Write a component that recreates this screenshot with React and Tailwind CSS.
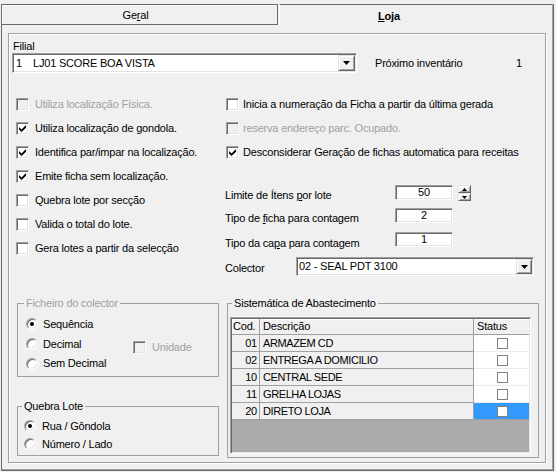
import React from "react";

const sunken =
  "border border-t-[#a0a0a0] border-l-[#a0a0a0] border-r-white border-b-white shadow-[inset_1px_1px_0_#696969,inset_-1px_-1px_0_#e3e3e3]";
const raised =
  "border border-t-[#e3e3e3] border-l-[#e3e3e3] border-r-[#696969] border-b-[#696969] shadow-[inset_1px_1px_0_#fff,inset_-1px_-1px_0_#a0a0a0]";

function CheckMark() {
  return (
    <svg width="7" height="7" viewBox="0 0 7 7">
      <path d="M0 2 L2.5 4.5 L7 0 L7 2.7 L2.5 7 L0 4.6 Z" fill="#000" />
    </svg>
  );
}

function Check({ checked, disabled }) {
  return (
    <span
      className={`w-[13px] h-[13px] shrink-0 flex items-center justify-center ${sunken} ${
        disabled ? "bg-[#f0f0f0]" : "bg-white"
      }`}
    >
      {checked && <CheckMark />}
    </span>
  );
}

function Radio({ checked }) {
  return (
    <span
      className={`w-[12px] h-[12px] shrink-0 rounded-full bg-white flex items-center justify-center ${sunken}`}
    >
      {checked && <span className="w-[4px] h-[4px] rounded-full bg-black" />}
    </span>
  );
}

function DownTri() {
  return (
    <svg width="7" height="4" viewBox="0 0 7 4">
      <path d="M0 0 H7 L3.5 4 Z" fill="#000" />
    </svg>
  );
}

function CheckRow({ label, checked, disabled, gap }) {
  return (
    <div className={`h-[24px] flex items-center ${gap}`}>
      <Check checked={checked} disabled={disabled} />
      <span className={`leading-[13px] whitespace-nowrap ${disabled ? "text-[#a0a0a0]" : ""}`}>{label}</span>
    </div>
  );
}

const leftChecks = [
  { label: "Utiliza localização Física.", disabled: true },
  { label: "Utiliza localização de gondola.", checked: true },
  { label: "Identifica par/impar na localização.", checked: true },
  { label: "Emite ficha sem localização.", checked: true },
  { label: "Quebra lote por secção" },
  { label: "Valida o total do lote." },
  { label: "Gera lotes a partir da selecção" },
];

const rightChecks = [
  { label: "Inicia a numeração da Ficha a partir da última gerada" },
  { label: "reserva endereço parc. Ocupado.", disabled: true },
  { label: "Desconsiderar Geração de fichas automatica para receitas", checked: true },
];

const gridRows = [
  ["01", "ARMAZEM CD"],
  ["02", "ENTREGA A DOMICILIO"],
  ["10", "CENTRAL SEDE"],
  ["11", "GRELHA LOJAS"],
  ["20", "DIRETO LOJA"],
];

export default function App() {
  return (
    <div className="w-[556px] h-[472px] bg-[#f0f0f0] pt-[4px] pl-[1px] font-['Liberation_Sans',Arial,sans-serif] text-[11px] tracking-[-0.2px] text-black overflow-hidden">
      <div className="w-[553px] h-[467px] flex flex-col border-l border-r border-b border-l-[#696969] border-r-[#696969] border-b-[#696969] shadow-[inset_-1px_-1px_0_#a0a0a0]">
        {/* tabs */}
        <div className="flex items-start h-[22px]">
          <div className="w-[276px] h-[21px] border-t border-r border-b border-[#696969] shadow-[inset_1px_1px_0_#fff] flex items-center justify-center pr-[8px] pt-[1px] leading-[13px]">
            <span>
              Ge<u>r</u>al
            </span>
          </div>
          <div className="flex-1 ml-[1px] mr-[1px] h-[22px] border-t border-l border-t-[#696969] border-l-white flex items-center pl-[98px] pt-[1px] font-bold leading-[13px]">
            <span>
              <u>L</u>oja
            </span>
          </div>
        </div>
        {/* body */}
        <div className="pl-[6px] pt-[7px]">
          <div className="w-[538px] h-[430px] border border-[#a0a0a0] shadow-[inset_1px_1px_0_#fff,1px_1px_0_#fff] flex flex-col">
            <div className="ml-[4px] mt-[6px] leading-[13px]">Filial</div>
            <div className="flex items-center ml-[3px]">
              <div className={`${sunken} bg-white w-[345px] h-[20px] flex items-stretch`}>
                <span className="flex-1 flex items-center pl-[3px] whitespace-pre">
                  <span className="w-[17px]">1</span>
                  <span>LJ01 SCORE BOA VISTA</span>
                </span>
                <span className={`${raised} bg-[#f0f0f0] w-[17px] m-[1px] flex items-center justify-center`}>
                  <DownTri />
                </span>
              </div>
              <span className="ml-[18px] w-[141px] leading-[13px]">Próximo inventário</span>
              <span className="leading-[13px]">1</span>
            </div>

            {/* two columns */}
            <div className="flex mt-[19px]">
              <div className="w-[216px] flex flex-col pl-[7px]">
                {leftChecks.map((c) => (
                  <CheckRow key={c.label} {...c} gap="gap-[6px]" />
                ))}
              </div>
              <div className="flex flex-col">
                <div className="flex flex-col pl-[1px]">
                  {rightChecks.map((c) => (
                    <CheckRow key={c.label} {...c} gap="gap-[4px]" />
                  ))}
                </div>
                <div className="flex items-start h-[16px] mt-[21px]">
                  <span className="w-[170px] mt-[4px] leading-[13px]">
                    Limite de Ítens <u>p</u>or lote
                  </span>
                  <div className={`${sunken} bg-white w-[58px] h-[15px] flex items-center justify-center leading-[13px]`}>50</div>
                  <div className="ml-[5px] w-[13px] h-[16px] flex flex-col">
                    <span className={`${raised} bg-[#f0f0f0] flex-1 flex items-center justify-center`}>
                      <svg width="5" height="3" viewBox="0 0 5 3">
                        <path d="M2.5 0 L5 3 H0 Z" fill="#000" />
                      </svg>
                    </span>
                    <span className={`${raised} bg-[#f0f0f0] flex-1 flex items-center justify-center`}>
                      <svg width="5" height="3" viewBox="0 0 5 3">
                        <path d="M0 0 H5 L2.5 3 Z" fill="#000" />
                      </svg>
                    </span>
                  </div>
                </div>
                <div className="flex items-start h-[15px] mt-[7px]">
                  <span className="w-[170px] mt-[4px] leading-[13px]">
                    Tipo de <u>f</u>icha para contagem
                  </span>
                  <div className={`${sunken} bg-white w-[58px] h-[15px] flex items-center justify-center leading-[13px]`}>2</div>
                </div>
                <div className="flex items-start h-[15px] mt-[9px]">
                  <span className="w-[170px] mt-[5px] leading-[13px]">
                    Tipo da ca<u>p</u>a para contagem
                  </span>
                  <div className={`${sunken} bg-white w-[58px] h-[15px] flex items-center justify-center leading-[13px]`}>1</div>
                </div>
                <div className="flex items-start h-[19px] mt-[10px]">
                  <span className="w-[71px] mt-[5px] leading-[13px]">Colector</span>
                  <div className={`${sunken} bg-white w-[238px] h-[19px] flex items-stretch`}>
                    <span className="flex-1 flex items-center pl-[2px]">02 - SEAL PDT 3100</span>
                    <span className={`${raised} bg-[#f0f0f0] w-[16px] m-[1px] flex items-center justify-center`}>
                      <DownTri />
                    </span>
                  </div>
                </div>
              </div>
            </div>

            {/* bottom */}
            <div className="flex items-start mt-[21px] ml-[8px]">
              <div className="flex flex-col w-[202px]">
                <fieldset className="border border-[#a0a0a0] h-[80px] w-[202px]">
                  <legend className="ml-[6px] px-[2px] leading-[13px] text-[#a0a0a0]">Ficheiro do colector</legend>
                  <div className="flex flex-col pt-[4px] pl-[8px]">
                    <div className="h-[20px] flex items-center gap-[5px]">
                      <Radio checked />
                      <span className="leading-[13px]">Sequência</span>
                    </div>
                    <div className="h-[20px] flex items-center">
                      <div className="w-[107px] flex items-center gap-[5px]">
                        <Radio />
                        <span className="leading-[13px]">Decimal</span>
                      </div>
                      <div className="mt-[6px] flex items-center gap-[6px] text-[#a0a0a0]">
                        <Check disabled />
                        <span className="leading-[13px]">Unidade</span>
                      </div>
                    </div>
                    <div className="h-[19px] flex items-center gap-[5px]">
                      <Radio />
                      <span className="leading-[13px]">Sem Decimal</span>
                    </div>
                  </div>
                </fieldset>
                <fieldset className="mt-[23px] border border-[#a0a0a0] h-[56px] w-[202px]">
                  <legend className="ml-[4px] px-[2px] leading-[13px]">Quebra Lote</legend>
                  <div className="flex flex-col pt-[4px] pl-[6px]">
                    <div className="h-[18px] flex items-center gap-[6px]">
                      <Radio checked />
                      <span className="leading-[13px]">Rua / Gôndola</span>
                    </div>
                    <div className="h-[18px] flex items-center gap-[6px]">
                      <Radio />
                      <span className="leading-[13px]">Número / Lado</span>
                    </div>
                  </div>
                </fieldset>
              </div>

              <fieldset className="ml-[8px] border border-[#a0a0a0] w-[312px] h-[161px]">
                <legend className="ml-[4px] px-[2px] leading-[13px]">Sistemática de Abastecimento</legend>
                <div className="pt-[7px] pl-[2px]">
                  <div className={`${sunken} p-[1px] w-[301px] h-[137px] bg-[#ababab] flex flex-col`}>
                    <div className="flex h-[16px] bg-[#f0f0f0] shadow-[inset_1px_1px_0_#fff]">
                      <div className="w-[28px] border-r border-b border-[#a0a0a0] pl-[1px] flex items-center leading-[13px]">Cod.</div>
                      <div className="w-[214px] border-r border-b border-[#a0a0a0] pl-[3px] flex items-center leading-[13px]">Descrição</div>
                      <div className="flex-1 border-b border-[#a0a0a0] pl-[3px] flex items-center leading-[13px]">Status</div>
                    </div>
                    {gridRows.map(([cod, desc], i) => (
                      <div key={cod} className="flex h-[17px]">
                        <div className="w-[28px] bg-[#f0f0f0] border-r border-b border-[#a0a0a0] pr-[2px] flex items-center justify-end leading-[13px]">
                          {cod}
                        </div>
                        <div className="w-[214px] bg-[#f0f0f0] border-r border-b border-[#a0a0a0] pl-[3px] flex items-center leading-[13px] whitespace-nowrap tracking-[-0.4px]">
                          {desc}
                        </div>
                        <div
                          className={`flex-1 border-b flex items-center justify-center ${
                            i === gridRows.length - 1 ? "bg-[#3399ff] border-[#a0a0a0]" : "bg-white border-[#ececec]"
                          }`}
                        >
                          <span className="w-[11px] h-[11px] border border-[#808080] bg-white ml-[1px]" />
                        </div>
                      </div>
                    ))}
                  </div>
                </div>
              </fieldset>
            </div>
          </div>
        </div>
      </div>
    </div>
  );
}
